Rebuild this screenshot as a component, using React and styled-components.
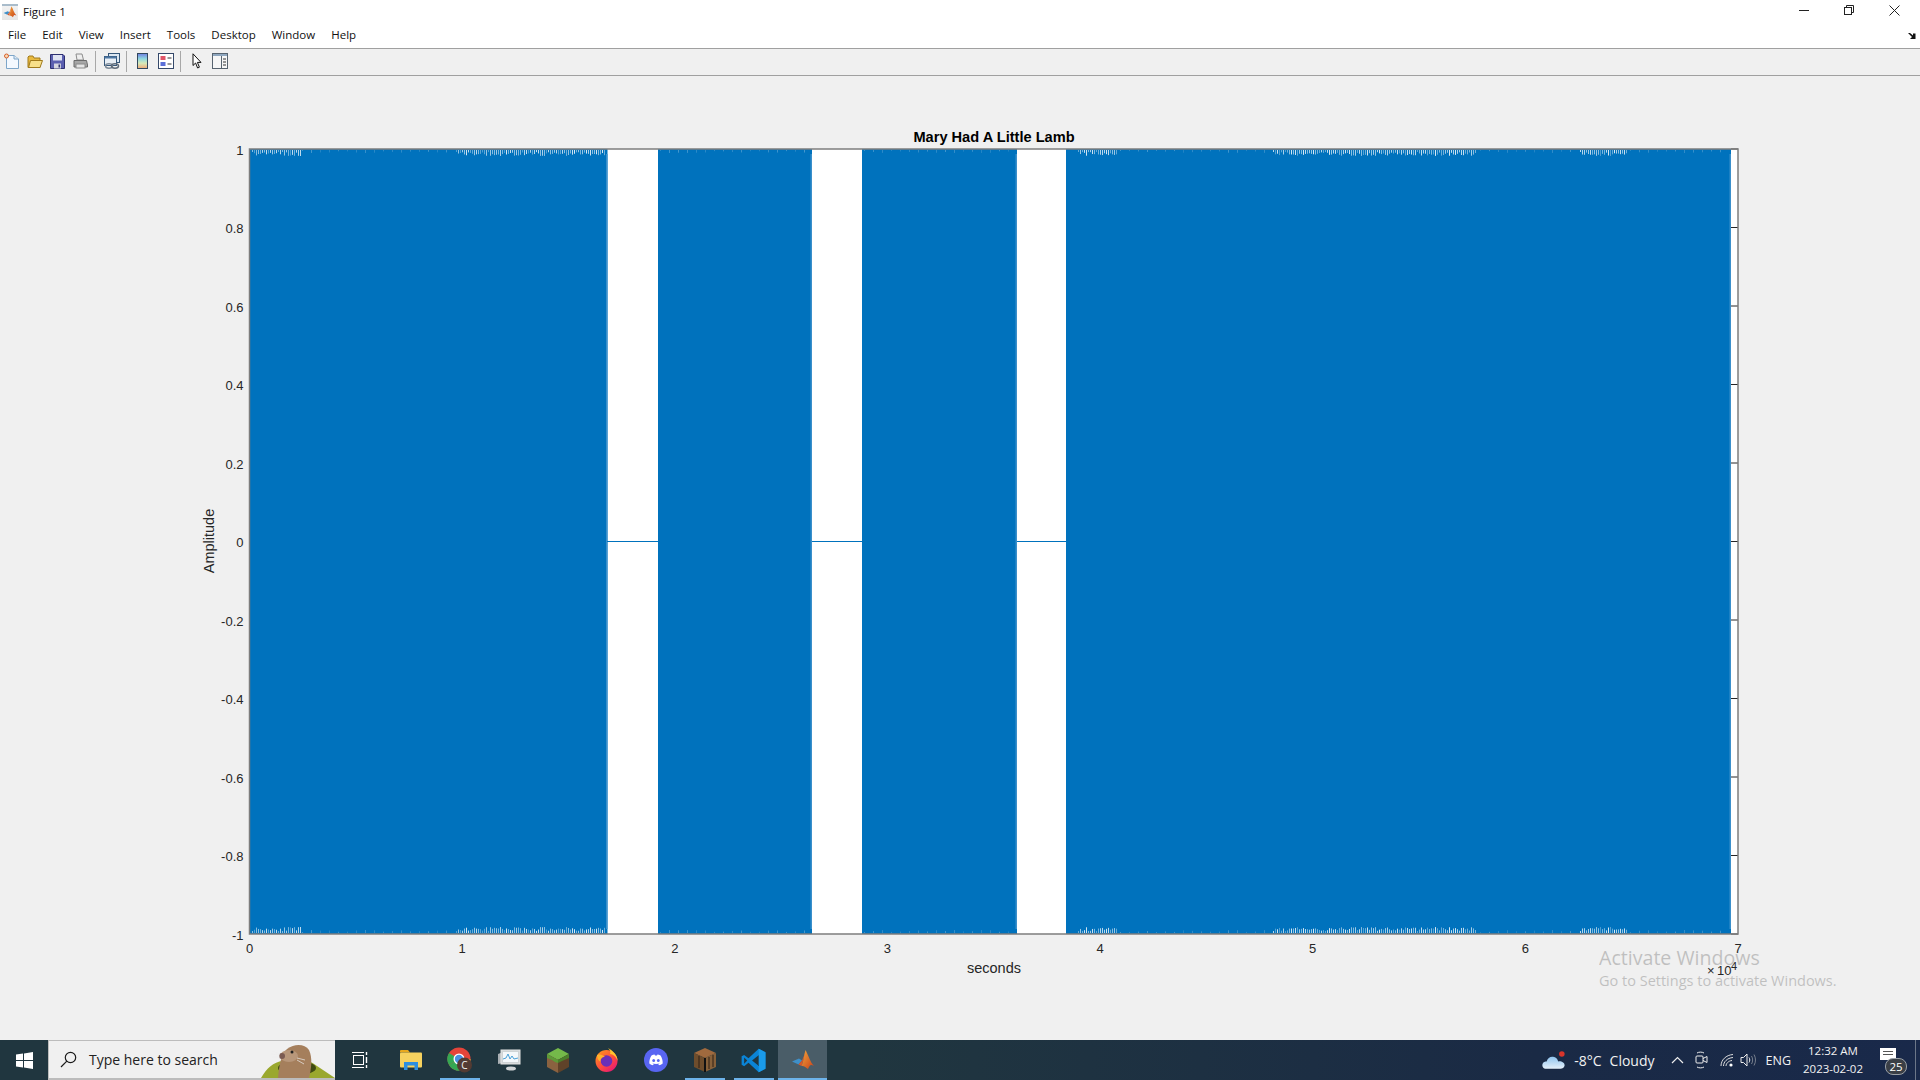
import React from 'react'
import styled, { createGlobalStyle } from 'styled-components'

const GlobalStyle = createGlobalStyle`
  html, body {
    margin: 0;
    padding: 0;
    background: #f0f0f0;
    overflow: hidden;
  }
`

const Page = styled.div`
  position: relative;
  width: 1920px;
  height: 1080px;
  display: flex;
  flex-direction: column;
  font-family: "Open Sans", "Noto Sans", sans-serif;
`
const TitleBar = styled.div`
  height: 20px;
  background: #fff;
  display: flex;
  align-items: center;
  padding-left: 2px;
  font-size: 11.5px;
  color: #111;
`
const TitleIcon = styled.div`
  width: 16px;
  height: 16px;
  margin-top: 4px;
  background: linear-gradient(180deg, #a9bccb 0, #a9bccb 2px, #f2f2f2 2px, #e6e6e6 100%);
  display: flex;
  align-items: center;
  justify-content: center;
`
const TitleText = styled.span`
  margin-left: 5px;
  margin-top: 3px;
`
const WindowControls = styled.div`
  margin-left: auto;
  display: flex;
  align-self: flex-start;
  padding: 5px 20px 0 0;
  gap: 34px;
`
const MenuBar = styled.div`
  height: 28px;
  background: #fff;
  border-bottom: 1px solid #a0a0a0;
  display: flex;
  align-items: center;
  padding: 0 4px 0 8px;
  gap: 16px;
  font-size: 11.5px;
  color: #111;
`
const MenuItem = styled.span``
const Expand = styled.svg`
  margin-left: auto;
  margin-top: 3px;
`
const ToolBar = styled.div`
  height: 26px;
  background: #f0f0f0;
  border-bottom: 1px solid #a0a0a0;
  display: flex;
  align-items: flex-start;
`
const ToolButton = styled.div`
  width: 23px;
  height: 24px;
  display: flex;
  align-items: center;
  justify-content: center;
`
const ToolSep = styled.div`
  width: 1px;
  height: 21px;
  background: #a8a8a8;
  margin: 2px 4px 0 3px;
`
const Figure = styled.svg`
  display: block;
  flex: 1;
  width: 1920px;
  height: 964px;
  background: #f0f0f0;
`
const Taskbar = styled.div`
  height: 40px;
  display: flex;
  align-items: stretch;
  padding-right: 4px;
  background: linear-gradient(90deg, #20363f 0%, #20363f 45%, #1a2a45 80%, #19294a 100%);
  color: #fff;
`
const StartButton = styled.div`
  width: 48px;
  display: flex;
  align-items: center;
  justify-content: center;
`
const SearchBox = styled.div`
  position: relative;
  width: 287px;
  box-sizing: border-box;
  background: #f0f0f0;
  border: 1px solid #bcbcbc;
  border-bottom-width: 2px;
  border-right-width: 0;
  display: flex;
  align-items: center;
  padding-left: 11px;
  gap: 12px;
  font-size: 14px;
  color: #222;
  overflow: hidden;
`
const Doodle = styled.svg`
  position: absolute;
  right: 0;
  bottom: 0;
`
const AppSlot = styled.div`
  position: relative;
  width: 49px;
  display: flex;
  align-items: center;
  justify-content: center;
  box-sizing: border-box;
  background: ${p => (p.$active ? '#4a5d68' : 'transparent')};
  &:first-child {
    margin-right: 2px;
  }
  &::after {
    content: '';
    display: ${p => (p.$open ? 'block' : 'none')};
    position: absolute;
    left: ${p => (p.$active ? '0' : '5px')};
    right: ${p => (p.$active ? '0' : '4px')};
    bottom: 0;
    height: 2px;
    background: #6db3ea;
  }
`
const AppStrip = styled.div`
  display: flex;
`
const Tray = styled.div`
  margin-left: auto;
  display: flex;
  align-items: center;
  padding-right: 4px;
  border-right: 1px solid #6b7688;
  color: #f2f2f2;
`
const Weather = styled.div`
  display: flex;
  align-items: center;
  gap: 8px;
  margin-right: 12px;
  font-size: 14px;
  white-space: nowrap;
`
const TrayIcon = styled.div`
  width: ${p => p.$w || 24}px;
  display: flex;
  align-items: center;
  justify-content: center;
`
const Lang = styled.span`
  margin: 0 9px 0 7px;
  font-size: 12.5px;
`
const Clock = styled.div`
  display: flex;
  flex-direction: column;
  align-items: center;
  font-size: 11.5px;
  line-height: 18px;
  width: 66px;
  white-space: nowrap;
`
const Notify = styled.div`
  position: relative;
  width: 26px;
  height: 32px;
  margin: 0 5px 0 14px;
`
const Badge = styled.span`
  position: absolute;
  left: 5px;
  top: 14px;
  width: 20px;
  height: 15px;
  border-radius: 8px;
  background: #3a3f46;
  border: 1px solid #9aa0a6;
  font-size: 11.5px;
  line-height: 15px;
  text-align: center;
  color: #fff;
`
const Watermark = styled.div`
  position: absolute;
  left: 1599px;
  top: 944px;
  color: #000;
  opacity: 0.2;
  pointer-events: none;
`
const WatermarkTitle = styled.div`
  font-size: 19.6px;
  line-height: 27px;
`
const WatermarkSub = styled.div`
  font-size: 14.5px;
  line-height: 20px;
`

// plot geometry, page pixels
const PLOT = { left: 249.5, right: 1738, top: 149, bottom: 934 }
const BLUE = '#0072bd'
const SEGMENTS = [
  [250, 607.5],
  [658, 812],
  [862, 1017],
  [1066, 1731],
]

const rand = seed => {
  let s = seed
  return () => {
    s = (s * 16807) % 2147483647
    return s / 2147483647
  }
}

const makeNoise = (x0, x1, strong, seed) => {
  const r = rand(seed)
  const out = []
  for (let x = x0; x < x1; x += strong ? 2 : 9) {
    const h = strong ? 2 + r() * 4 : 1 + r() * 2
    out.push({ x: x + 0.5, h, a: strong ? 0.3 + r() * 0.55 : 0.12 + r() * 0.15 })
  }
  return out
}

const NOISE = [
  ...makeNoise(252, 301, true, 11),
  ...makeNoise(456, 605, true, 23),
  ...makeNoise(302, 455, false, 37),
  ...makeNoise(660, 810, false, 41),
  ...makeNoise(864, 1015, false, 43),
  ...makeNoise(1078, 1117, true, 47),
  ...makeNoise(1120, 1272, false, 53),
  ...makeNoise(1273, 1476, true, 59),
  ...makeNoise(1480, 1578, false, 61),
  ...makeNoise(1580, 1628, true, 67),
  ...makeNoise(1630, 1728, false, 71),
]

const yTicks = ['1', '0.8', '0.6', '0.4', '0.2', '0', '-0.2', '-0.4', '-0.6', '-0.8', '-1']
const xTicks = ['0', '1', '2', '3', '4', '5', '6', '7']

const ChartText = styled.text`
  font-family: "Liberation Sans", Arial, sans-serif;
  font-size: ${p => p.$size || 13}px;
  font-weight: ${p => (p.$bold ? 700 : 400)};
  fill: ${p => p.$fill || '#262626'};
`

const Chart = () => {
  const h = PLOT.bottom - PLOT.top
  const w = PLOT.right - PLOT.left
  return (
    <Figure viewBox="0 76 1920 964">
      <rect x={PLOT.left} y={PLOT.top} width={w} height={h} fill="#fff" />
      {SEGMENTS.map(([a, b]) => (
        <rect key={a} x={a} y={PLOT.top} width={b - a} height={h} fill={BLUE} />
      ))}
      {SEGMENTS.map(([a, b]) => (
        <rect key={b} x={b - 1.5} y={PLOT.top + 5} width={1.5} height={h - 10} fill="#3a8fcb" />
      ))}
      {[[607, 658], [812, 862], [1017, 1066]].map(([a, b]) => (
        <line key={a} x1={a} x2={b} y1={541.5} y2={541.5} stroke={BLUE} strokeWidth="1" />
      ))}
      {NOISE.map(n => (
        <g key={n.x} opacity={n.a}>
          <line x1={n.x} x2={n.x} y1={PLOT.top + 1} y2={PLOT.top + 1 + n.h} stroke="#fff" />
          <line x1={n.x} x2={n.x} y1={PLOT.bottom - 1} y2={PLOT.bottom - 1 - n.h} stroke="#fff" />
        </g>
      ))}
      {yTicks.map((t, i) => {
        const y = PLOT.top + (h * i) / 10
        return (
          <g key={t}>
            <line x1={PLOT.right - 7} x2={PLOT.right} y1={y} y2={y} stroke="#262626" />
            <ChartText x={PLOT.left - 6} y={y + 5.5} textAnchor="end">{t}</ChartText>
          </g>
        )
      })}
      {xTicks.map((t, i) => (
        <ChartText key={t} x={PLOT.left + (w * i) / 7} y={953} textAnchor="middle">{t}</ChartText>
      ))}
      <rect x={PLOT.left} y={PLOT.top} width={w} height={h} fill="none" stroke="#7d7d7d" strokeWidth="1.5" />
      <ChartText x={994} y={142} textAnchor="middle" $size={14.6} $bold $fill="#000">Mary Had A Little Lamb</ChartText>
      <ChartText x={994} y={973} textAnchor="middle" $size={14.5}>seconds</ChartText>
      <ChartText x={0} y={0} textAnchor="middle" $size={14.5} transform="translate(214 541) rotate(-90)">Amplitude</ChartText>
      <ChartText x={1707} y={975} $size={13}>×</ChartText>
      <ChartText x={1717} y={975} $size={13}>10</ChartText>
      <ChartText x={1731} y={970} $size={11}>4</ChartText>
    </Figure>
  )
}

const MatlabLogo = ({ size = 16 }) => (
  <svg width={size} height={size} viewBox="0 0 24 24">
    <defs>
      <linearGradient id="mlPeak" x1="0" y1="0" x2="1" y2="1">
        <stop offset="0" stopColor="#f2a43a" />
        <stop offset="1" stopColor="#c8401a" />
      </linearGradient>
    </defs>
    <path d="M1 13.5 L8 10.5 L11 12.5 L7.5 16.5 Z" fill="#3f8fc8" />
    <path d="M7.5 16.5 L11 12.5 L14.5 4 L12 13 L10.5 18 Z" fill="#d9582a" />
    <path d="M14.5 2 C17 6 19 14 23 18 C20 16.5 19 16 17 21 C15 19 12.5 17.5 10.5 18 C12.5 14 13 7 14.5 2 Z" fill="url(#mlPeak)" />
  </svg>
)

const NewIcon = () => (
  <svg width="17" height="17" viewBox="0 0 17 17">
    <path d="M3.5 2.5 H11 L15.5 6 V15.5 H3.5 Z" fill="#f4f9ff" stroke="#7ea6c9" />
    <path d="M11 2.5 V6 H15.5" fill="#dfeaf5" stroke="#7ea6c9" />
    <circle cx="3.5" cy="3" r="2" fill="#f7d9b8" stroke="#d9602a" />
  </svg>
)
const OpenIcon = () => (
  <svg width="16" height="15" viewBox="0 0 16 15">
    <path d="M1 3 L1 13.5 H13 V4 H7 L6 2 H2 Z" fill="#e8b93f" stroke="#a07a1c" />
    <path d="M1.5 13.5 L3.5 6.5 H15.5 L13 13.5 Z" fill="#f8e08a" stroke="#a07a1c" />
  </svg>
)
const SaveIcon = () => (
  <svg width="15" height="15" viewBox="0 0 15 15">
    <path d="M0.5 0.5 H13 L14.5 2 V14.5 H0.5 Z" fill="#5b5fb0" stroke="#2c2f70" />
    <rect x="3" y="1" width="9" height="5.5" fill="#dfe3f2" />
    <rect x="4" y="9.5" width="7" height="5" fill="#d6d6e0" />
    <rect x="8.5" y="10.5" width="1.6" height="3" fill="#30346f" />
  </svg>
)
const PrintIcon = () => (
  <svg width="15" height="16" viewBox="0 0 15 16">
    <path d="M3 1 H9 L10.5 7 H4 Z" fill="#eee" stroke="#8c8c8c" />
    <path d="M1 7.5 H13.5 L14.5 12 V14 H1 Z" fill="#a7a7a7" stroke="#6b6b6b" />
    <rect x="3" y="11" width="9" height="4" fill="#e5e5e5" stroke="#8a8a8a" />
  </svg>
)
const LinkIcon = () => (
  <svg width="16" height="16" viewBox="0 0 16 16">
    <rect x="4.5" y="0.5" width="11" height="9" fill="#dce7f2" stroke="#35577a" />
    <rect x="0.5" y="3.5" width="12" height="9" fill="#e8eff6" stroke="#35577a" />
    <rect x="0.5" y="3.5" width="12" height="2" fill="#4d77a3" />
    <ellipse cx="5" cy="13" rx="3.5" ry="2.2" fill="none" stroke="#7d8b99" strokeWidth="1.5" />
    <ellipse cx="11" cy="13" rx="3.5" ry="2.2" fill="none" stroke="#5d6b7a" strokeWidth="1.5" />
  </svg>
)
const ColorbarIcon = () => (
  <svg width="11" height="16" viewBox="0 0 11 16">
    <defs>
      <linearGradient id="cbar" x1="0" y1="0" x2="0" y2="1">
        <stop offset="0" stopColor="#6f7ee0" />
        <stop offset="0.35" stopColor="#8fd8e0" />
        <stop offset="0.65" stopColor="#d8eab8" />
        <stop offset="1" stopColor="#f0a878" />
      </linearGradient>
    </defs>
    <rect x="0.5" y="0.5" width="10" height="15" fill="url(#cbar)" stroke="#33485e" />
  </svg>
)
const LegendIcon = () => (
  <svg width="16" height="16" viewBox="0 0 16 16">
    <rect x="0.5" y="0.5" width="15" height="15" fill="#fff" stroke="#35496a" />
    <rect x="2.5" y="3" width="5" height="4" fill="#e0566a" />
    <rect x="2.5" y="9" width="5" height="4" fill="#5a6fd8" />
    <path d="M9.5 5 H13.5 M9.5 11 H13.5" stroke="#333" />
  </svg>
)
const CursorIcon = () => (
  <svg width="10" height="16" viewBox="0 0 10 16">
    <path d="M1 0.8 V12.5 L3.6 10 L5.6 15 L7.4 14.2 L5.4 9.4 H9 Z" fill="#fff" stroke="#111" />
  </svg>
)
const PanelIcon = () => (
  <svg width="16" height="16" viewBox="0 0 16 16">
    <rect x="0.5" y="0.5" width="15" height="15" fill="#f7f7f7" stroke="#586470" />
    <rect x="1" y="1" width="14" height="2" fill="#8fa7bf" />
    <path d="M9.5 3 V15" stroke="#586470" />
    <path d="M11 6 H14 M11 9 H14 M11 12 H14" stroke="#333" />
  </svg>
)

const WindowsLogo = () => (
  <svg width="17" height="17" viewBox="0 0 17 17" fill="#fff">
    <path d="M0 2.5 L7 1.5 V8 H0 Z M8 1.4 L17 0 V8 H8 Z M0 9 H7 V15.5 L0 14.5 Z M8 9 H17 V17 L8 15.6 Z" />
  </svg>
)
const SearchGlass = () => (
  <svg width="17" height="17" viewBox="0 0 17 17" fill="none" stroke="#1b1b1b" strokeWidth="1.2">
    <circle cx="10.5" cy="6.5" r="5.2" />
    <path d="M6.8 10.2 L1 16" />
  </svg>
)
const Mole = () => (
  <Doodle width="74" height="36" viewBox="0 0 74 36">
    <path d="M0 36 C6 26 12 20 22 19 C34 15 48 17 56 24 C62 28 68 32 74 36 Z" fill="#9aa82e" />
    <ellipse cx="36" cy="26" rx="19" ry="7" fill="#3f4a12" />
    <path d="M17 36 C18 24 20 12 26 7 C34 1 44 2 48 8 C52 16 50 28 48 36 Z" fill="#a57f5c" />
    <ellipse cx="28" cy="14" rx="9" ry="6" fill="#b8977a" />
    <circle cx="21" cy="14" r="3" fill="#7b5b52" />
    <circle cx="31" cy="10" r="1.5" fill="#222" />
    <path d="M10 12 L19 13 M11 15 L19 15 M11 9 L19 12 M36 16 L44 18 M36 18 L43 22" stroke="#eee" strokeWidth="0.7" />
  </Doodle>
)
const TaskView = () => (
  <svg width="16" height="16" viewBox="0 0 16 16" fill="none" stroke="#fff">
    <rect x="1.5" y="3.5" width="10" height="9" />
    <path d="M0 0.5 H12 M0 15.5 H12" />
    <path d="M14.5 0 V3 M14.5 5 V11 M14.5 13 V16" strokeWidth="1.4" />
  </svg>
)
const FolderIcon = () => (
  <svg width="22" height="20" viewBox="0 0 22 20">
    <path d="M0 1 C0 0.5 0.5 0 1 0 H8 L10 2.5 H0 Z" fill="#e8a91d" />
    <rect x="0" y="2.5" width="22" height="15" rx="1" fill="#f6d25f" />
    <path d="M4 20 V12 H18 V20 H14.5 V15.5 H7.5 V20 Z" fill="#2c8fe0" />
  </svg>
)
const ChromeIcon = () => (
  <svg width="26" height="26" viewBox="0 0 26 26">
    <circle cx="12" cy="12" r="11.5" fill="#e5443a" />
    <path d="M12 12 L2 18 A11.5 11.5 0 0 1 2 6 Z" fill="#34a853" />
    <path d="M2 18 L12 12 L18 22 A11.5 11.5 0 0 1 2 18 Z" fill="#34a853" />
    <path d="M12 12 L23.5 12 A11.5 11.5 0 0 1 18 22 Z" fill="#fbc02d" />
    <circle cx="12" cy="12" r="5.5" fill="#fff" />
    <circle cx="12" cy="12" r="4.2" fill="#4a90e2" />
    <circle cx="17.5" cy="18" r="7.5" fill="#533b33" />
    <text x="17.5" y="21.5" fontSize="10" fontFamily="Open Sans, sans-serif" textAnchor="middle" fill="#f3f3f3">C</text>
  </svg>
)
const ResMonIcon = () => (
  <svg width="24" height="22" viewBox="0 0 24 22">
    <ellipse cx="14" cy="19.5" rx="5" ry="2" fill="#cfd3d6" />
    <path d="M1 5 L6 3 V14 L1 15 Z" fill="#aab0b4" />
    <rect x="4" y="1" width="19" height="14" fill="#cfd4d6" stroke="#e6e6e6" />
    <rect x="6" y="3" width="15" height="10" fill="#f4f8fb" />
    <path d="M6 10 L9 9 L11 5 L13 10 L15 7 L17 10 L21 9" fill="none" stroke="#4aa0d8" />
  </svg>
)
const GrassBlock = () => (
  <svg width="24" height="25" viewBox="0 0 24 25">
    <path d="M12 0 L23 6 L12 12 L1 6 Z" fill="#74b94a" />
    <path d="M1 6 L12 12 V25 L1 19 Z" fill="#8a6240" />
    <path d="M23 6 L12 12 V25 L23 19 Z" fill="#5f4229" />
    <path d="M1 6 L12 12 V15 L9 14 L6 12 L1 10 Z" fill="#5d9a37" />
    <path d="M23 6 L12 12 V15 L16 13 L23 10 Z" fill="#4a7f2b" />
  </svg>
)
const FirefoxIcon = () => (
  <svg width="24" height="24" viewBox="0 0 24 24">
    <defs>
      <linearGradient id="ffx" x1="0" y1="0" x2="0.8" y2="1">
        <stop offset="0" stopColor="#ff9f1c" />
        <stop offset="0.6" stopColor="#ff4a3d" />
        <stop offset="1" stopColor="#e5167a" />
      </linearGradient>
    </defs>
    <circle cx="11.5" cy="13" r="11" fill="url(#ffx)" />
    <path d="M13 0 C17 2 23 7 22.5 13 C21.5 9 18 6 15 6 C16 4 15 2 13 0 Z" fill="#ffc52e" />
    <circle cx="11.5" cy="13" r="5.8" fill="#6b2fb8" />
    <path d="M2 7 C5 6 8 7 10 9 C7 9 5 11 5.5 14 C3 12 2 10 2 7 Z" fill="#ffb22c" />
  </svg>
)
const DiscordIcon = () => (
  <svg width="24" height="24" viewBox="0 0 24 24">
    <circle cx="12" cy="12" r="12" fill="#5865f2" />
    <path d="M7.5 7.5 C9 6.8 10 6.6 10.5 6.6 L11 7.4 H13 L13.5 6.6 C14 6.6 15 6.8 16.5 7.5 C18 9.8 18.8 12.5 18.7 15.5 C17.5 16.5 16.2 17 15 17.2 L14.3 16 C15 15.8 15.5 15.5 16 15.1 C13.5 16.3 10.5 16.3 8 15.1 C8.5 15.5 9 15.8 9.7 16 L9 17.2 C7.8 17 6.5 16.5 5.3 15.5 C5.2 12.5 6 9.8 7.5 7.5 Z" fill="#fff" />
    <ellipse cx="9.7" cy="12.5" rx="1.4" ry="1.6" fill="#5865f2" />
    <ellipse cx="14.3" cy="12.5" rx="1.4" ry="1.6" fill="#5865f2" />
  </svg>
)
const CraftingTable = () => (
  <svg width="22" height="24" viewBox="0 0 22 24">
    <path d="M11 0 L22 5 L11 10 L0 5 Z" fill="#a06a3e" />
    <path d="M0 5 L11 10 V24 L0 19 Z" fill="#6e4d2c" />
    <path d="M22 5 L11 10 V24 L22 19 Z" fill="#87613a" />
    <path d="M5 8 V20 M15 9 V21 M19 7 V19" stroke="#2e2015" />
    <path d="M11 10 V24" stroke="#111" strokeWidth="2" />
  </svg>
)
const VsCodeIcon = () => (
  <svg width="25" height="25" viewBox="0 0 24 24">
    <path fillRule="evenodd" d="M17 0.8 L23.5 4 V20 L17 23.2 L7.2 14.2 L3 17.4 L0.6 16 V8 L3 6.6 L7.2 9.8 Z M17.2 6.8 L10.6 12 L17.2 17.2 Z M3 9 V15 L6 12 Z" fill="#0a84d6" />
    <path d="M17 0.8 L23.5 4 V20 L17 23.2 Z M17.2 6.8 V17.2" fill="#1a9bea" />
  </svg>
)
const Cloud = () => (
  <svg width="24" height="19" viewBox="0 0 26 20">
    <defs>
      <linearGradient id="cloud" x1="0" y1="0" x2="0" y2="1">
        <stop offset="0" stopColor="#8fc4ef" />
        <stop offset="1" stopColor="#e6f1fb" />
      </linearGradient>
    </defs>
    <path d="M5 19 C1 19 0 16 0.5 14 C1 11.5 3.5 11 5 11 C6 7.5 9 5.5 12 6 C15 6.5 17 8.5 17.5 11 C20 10 25 12 24.5 15.5 C24 18 22 19 20 19 Z" fill="url(#cloud)" />
    <circle cx="21.5" cy="3" r="3" fill="#d9352b" />
  </svg>
)
const Chevron = () => (
  <svg width="13" height="8" viewBox="0 0 13 8" fill="none" stroke="#eee" strokeWidth="1.2">
    <path d="M1 7 L6.5 1.5 L12 7" />
  </svg>
)
const MeetIcon = () => (
  <svg width="13" height="18" viewBox="0 0 13 18" fill="none" stroke="#eee">
    <rect x="1" y="5" width="7" height="7" rx="1" />
    <path d="M8 7.5 L12 5.5 V11.5 L8 9.5" />
    <path d="M2 2 C4 0.8 7 0.8 9 2 M2 16 C4 17.2 7 17.2 9 16" />
  </svg>
)
const WifiIcon = () => (
  <svg width="14" height="14" viewBox="0 0 14 14" fill="none" stroke="#ddd">
    <path d="M1 13 C1 7 6 2 13 1.5 M3.5 13 C3.5 9 7 5 13 4.5 M6 13 C6 10.5 8.5 7.8 12 7.5" />
    <circle cx="11" cy="12" r="1.6" fill="#fff" stroke="none" />
  </svg>
)
const SpeakerIcon = () => (
  <svg width="17" height="14" viewBox="0 0 17 14" fill="none" stroke="#eee">
    <path d="M1 4.5 H3.5 L7 1 V13 L3.5 9.5 H1 Z" />
    <path d="M9 4.5 C10 6 10 8 9 9.5" />
    <path d="M11.5 3 C13 5.5 13 8.5 11.5 11 M14 1.5 C16 5 16 9 14 12.5" stroke="#777f8d" />
  </svg>
)

const menus = ['File', 'Edit', 'View', 'Insert', 'Tools', 'Desktop', 'Window', 'Help']

const App = () => {
  return (
    <Page>
      <GlobalStyle />
      <TitleBar>
        <TitleIcon><MatlabLogo size={14} /></TitleIcon>
        <TitleText>Figure 1</TitleText>
        <WindowControls>
          <svg width="11" height="11" viewBox="0 0 11 11"><path d="M0 5.5 H10" stroke="#222" /></svg>
          <svg width="11" height="11" viewBox="0 0 11 11" fill="none" stroke="#222">
            <rect x="0.5" y="2.5" width="7" height="7" />
            <path d="M2.5 2.5 V0.5 H9.5 V7.5 H7.5" />
          </svg>
          <svg width="11" height="11" viewBox="0 0 11 11" stroke="#222"><path d="M0.5 0.5 L10.5 10.5 M10.5 0.5 L0.5 10.5" /></svg>
        </WindowControls>
      </TitleBar>
      <MenuBar>
        {menus.map(m => <MenuItem key={m}>{m}</MenuItem>)}
        <Expand width="8" height="7" viewBox="0 0 8 7">
          <path d="M0 1 H2 L5 3.5 V1.5 L7.5 1.5 V7 H2 L4 5 Z" fill="#111" />
        </Expand>
      </MenuBar>
      <ToolBar>
        <ToolButton><NewIcon /></ToolButton>
        <ToolButton><OpenIcon /></ToolButton>
        <ToolButton><SaveIcon /></ToolButton>
        <ToolButton><PrintIcon /></ToolButton>
        <ToolSep />
        <ToolButton><LinkIcon /></ToolButton>
        <ToolSep />
        <ToolButton><ColorbarIcon /></ToolButton>
        <ToolButton><LegendIcon /></ToolButton>
        <ToolSep />
        <ToolButton><CursorIcon /></ToolButton>
        <ToolButton><PanelIcon /></ToolButton>
      </ToolBar>
      <Chart />
      <Taskbar>
        <StartButton><WindowsLogo /></StartButton>
        <SearchBox>
          <SearchGlass />
          Type here to search
          <Mole />
        </SearchBox>
        <AppStrip>
          <AppSlot><TaskView /></AppSlot>
          <AppSlot><FolderIcon /></AppSlot>
          <AppSlot $open><ChromeIcon /></AppSlot>
          <AppSlot><ResMonIcon /></AppSlot>
          <AppSlot><GrassBlock /></AppSlot>
          <AppSlot><FirefoxIcon /></AppSlot>
          <AppSlot><DiscordIcon /></AppSlot>
          <AppSlot $open><CraftingTable /></AppSlot>
          <AppSlot $open><VsCodeIcon /></AppSlot>
          <AppSlot $open $active><MatlabLogo size={24} /></AppSlot>
        </AppStrip>
        <Tray>
          <Weather>
            <Cloud />
            <span>-8°C</span>
            <span>Cloudy</span>
          </Weather>
          <TrayIcon $w={22}><Chevron /></TrayIcon>
          <TrayIcon $w={26}><MeetIcon /></TrayIcon>
          <TrayIcon $w={24}><WifiIcon /></TrayIcon>
          <TrayIcon $w={20}><SpeakerIcon /></TrayIcon>
          <Lang>ENG</Lang>
          <Clock>
            <span>12:32 AM</span>
            <span>2023-02-02</span>
          </Clock>
          <Notify>
            <svg width="17" height="14" viewBox="0 0 17 14">
              <path d="M0 1 H16 V13 H0 Z" fill="#fff" />
              <path d="M3 4.5 H13 M3 7.5 H13" stroke="#555" />
            </svg>
            <Badge>25</Badge>
          </Notify>
        </Tray>
      </Taskbar>
      <Watermark>
        <WatermarkTitle>Activate Windows</WatermarkTitle>
        <WatermarkSub>Go to Settings to activate Windows.</WatermarkSub>
      </Watermark>
    </Page>
  )
}

export default App
